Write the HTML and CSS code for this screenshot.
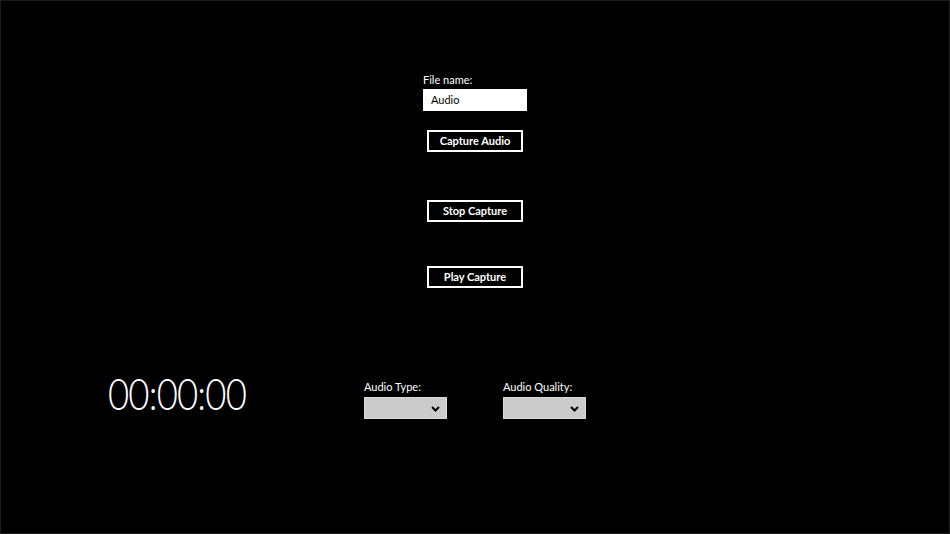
FILE: index.html
```html
<!DOCTYPE html>
<html>
<head>
<meta charset="utf-8">
<link rel="stylesheet" href="styles.css">
</head>
<body>
<div class="frame">
  <div class="capture">
    <div class="field">
      <div class="label">File name:</div>
      <div class="textbox">Audio</div>
    </div>
    <div class="btn btn-capture">Capture Audio</div>
    <div class="btn btn-stop">Stop Capture</div>
    <div class="btn btn-play">Play Capture</div>
  </div>
  <div class="bottom">
    <div class="timer-box"><div class="timer">00:00:00</div></div>
    <div class="combo-group">
      <div class="label">Audio Type:</div>
      <div class="combo">
        <svg class="chev" width="9" height="6" viewBox="0 0 9 6"><path d="M1 1 L4.5 4.5 L8 1" fill="none" stroke="#000" stroke-width="2"/></svg>
      </div>
    </div>
    <div class="combo-group">
      <div class="label">Audio Quality:</div>
      <div class="combo">
        <svg class="chev" width="9" height="6" viewBox="0 0 9 6"><path d="M1 1 L4.5 4.5 L8 1" fill="none" stroke="#000" stroke-width="2"/></svg>
      </div>
    </div>
  </div>
</div>
</body>
</html>
```
FILE: styles.css
```css
html, body {
  margin: 0;
  padding: 0;
  background: #000;
}
.frame {
  box-sizing: border-box;
  width: 950px;
  height: 534px;
  border: 1px solid #1c1c1c;
  background: #000;
  color: #fff;
  font-family: "Lato", "Open Sans", sans-serif;
  font-size: 11px;
  overflow: hidden;
}
.capture {
  display: flex;
  flex-direction: column;
  align-items: center;
  padding-top: 70px;
}
.label {
  line-height: 18px;
  height: 18px;
  color: #fff;
}
.field {
  width: 104px;
}
.textbox {
  box-sizing: border-box;
  width: 104px;
  height: 22px;
  background: #fff;
  color: #000;
  padding-left: 8px;
  line-height: 22px;
}
.btn {
  box-sizing: border-box;
  width: 96px;
  height: 22px;
  border: 2px solid #fff;
  font-weight: bold;
  text-align: center;
  line-height: 18px;
}
.btn-capture { margin-top: 19px; }
.btn-stop { margin-top: 48px; }
.btn-play { margin-top: 44px; }
.bottom {
  display: flex;
  align-items: flex-start;
  padding-left: 107px;
  margin-top: 91px;
}
.timer-box {
  width: 256px;
  margin-top: -8px;
}
.timer {
  display: inline-block;
  font-family: "Lato", "Open Sans", sans-serif;
  font-weight: 300;
  font-size: 44px;
  line-height: 44px;
  letter-spacing: -1px;
  transform: scaleX(0.83);
  transform-origin: left top;
}
.combo-group {
  width: 83px;
  margin-right: 56px;
}
.combo-group .label {
  line-height: 16px;
  height: 16px;
  margin-bottom: 2px;
}
.combo {
  box-sizing: border-box;
  width: 83px;
  height: 22px;
  background: #cbcbcb;
  border: 1px solid #d8d8d8;
  display: flex;
  align-items: center;
  justify-content: flex-end;
  padding-right: 6px;
}
.chev {
  display: block;
  margin-top: 1px;
}
```
